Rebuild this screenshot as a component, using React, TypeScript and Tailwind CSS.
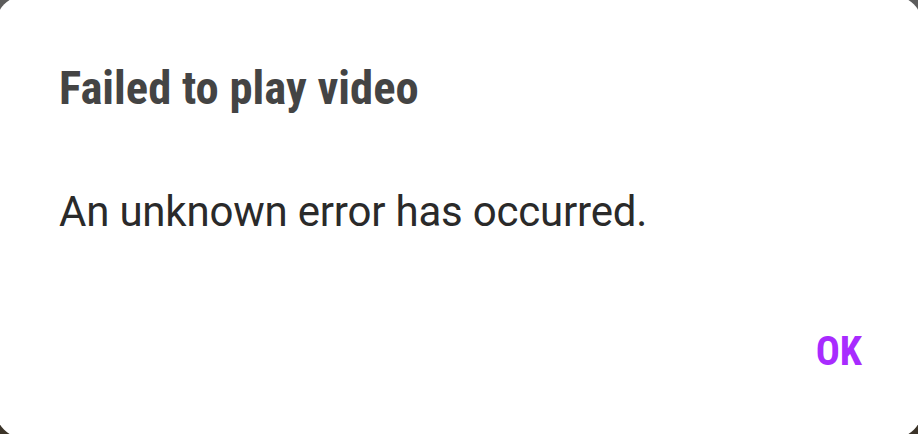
export default function App() {
  return (
    <div className="w-[918px] h-[434px] overflow-hidden bg-gradient-to-b from-[#5c5c5c] to-[#3b3328]">
      <div className="w-[926px] h-[442px] -m-[4px] bg-white rounded-[28px] flex flex-col" style={{ fontFamily: "Roboto, 'Noto Sans', sans-serif" }}>
        <div className="pl-[63px] pt-[69px]">
          <h1 className="text-[46.6px] leading-[47px] font-bold text-[#444444] [font-stretch:75%]">Failed to play video</h1>
        </div>
        <div className="pl-[63px] pt-[76px]">
          <p className="text-[42px] leading-[48px] text-[#2a2a2a] tracking-[-0.2px]">An unknown error has occurred.</p>
        </div>
        <div className="flex justify-end pr-[60px] pt-[96px]">
          <span className="text-[40px] leading-[40px] font-bold text-[#a82bff] [font-stretch:75%]">OK</span>
        </div>
      </div>
    </div>
  );
}
